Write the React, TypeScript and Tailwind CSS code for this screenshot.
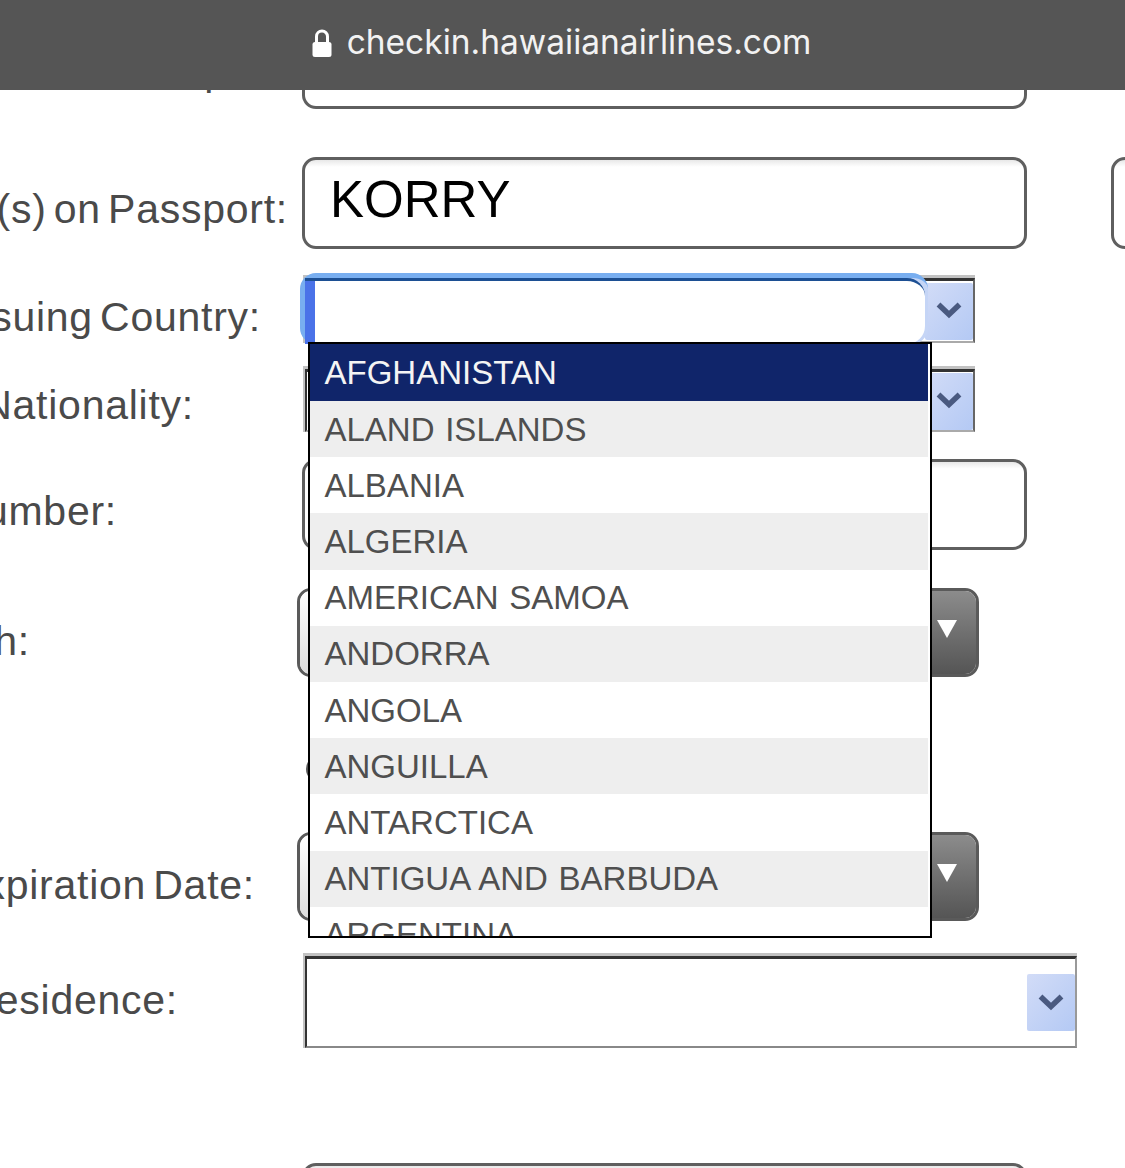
const countries = [
  "AFGHANISTAN",
  "ALAND ISLANDS",
  "ALBANIA",
  "ALGERIA",
  "AMERICAN SAMOA",
  "ANDORRA",
  "ANGOLA",
  "ANGUILLA",
  "ANTARCTICA",
  "ANTIGUA AND BARBUDA",
  "ARGENTINA",
];

function Label({ text, className }: { text: string; className: string }) {
  return (
    <div className={"flex shrink-0 justify-end whitespace-nowrap text-[41px] leading-[48px] tracking-[0.75px] [word-spacing:-5px] text-[#4a4a4a] " + className}>
      {text}
    </div>
  );
}

function Chevron() {
  return (
    <svg width="26" height="18" viewBox="0 0 26 18" fill="none">
      <polyline points="2.5,2.5 13,12.5 23.5,2.5" stroke="#4a5a80" strokeWidth="5.5" />
    </svg>
  );
}

function SelectButton() {
  return (
    <div className="flex h-[57px] w-[48px] items-center justify-center rounded-[2px] bg-linear-to-br from-[#d2dcf7] to-[#b4c9f4]">
      <Chevron />
    </div>
  );
}

function SelectField({ className, tall }: { className: string; tall?: boolean }) {
  return (
    <div className={"border-t-[3px] border-l-[2px] border-[#c2c2c2] " + className}>
      <div className={"flex h-full items-center justify-end border-t-[3px] border-r-[2px] border-b-[2px] border-l-[2px] border-t-[#333] border-l-[#333] bg-white " + (tall ? "border-r-[#999] border-b-[#888]" : "border-r-[#666] border-b-[#aaa]")}>
        <SelectButton />
      </div>
    </div>
  );
}

function DateField({ className }: { className: string }) {
  return (
    <div className={"flex h-[89px] w-[682px] overflow-hidden rounded-[14px] border-[3px] border-[#5a5a5a] " + className}>
      <div className="flex-1 bg-linear-to-b from-white to-[#dcdcdc]" />
      <div className="flex w-[45px] items-start bg-linear-to-b from-[#8c8c8c] to-[#555] pl-[6px] pt-[29px]">
        <svg width="20" height="18" viewBox="0 0 20 18">
          <polygon points="0,0 20,0 10,18" fill="#ffffff" />
        </svg>
      </div>
    </div>
  );
}

function TextField({ className, children }: { className: string; children?: React.ReactNode }) {
  return (
    <div className={"shrink-0 rounded-[14px] border-[3px] border-[#5f5f5f] bg-linear-to-b from-[#e8e8e8] from-0% to-white to-[8%] " + className}>
      {children}
    </div>
  );
}

export default function App() {
  return (
    <div className="relative h-[1168px] w-[1125px] overflow-hidden bg-white font-['Liberation_Sans',Arial,sans-serif]">
      <header className="relative z-10 flex h-[90px] items-center justify-center gap-[15px] bg-[#555555] pb-[4px] pr-[2px]">
        <svg width="20" height="28" viewBox="0 0 20 28" className="shrink-0">
          <path d="M4.5 15V7.5a5.5 5.5 0 0 1 11 0V15" fill="none" stroke="#fff" strokeWidth="3" />
          <rect x="0.5" y="13" width="19" height="15" rx="2.5" fill="#fff" />
        </svg>
        <span className="font-['Inter',sans-serif] text-[33.5px] leading-none text-[#f2f2f2]">checkin.hawaiianairlines.com</span>
      </header>

      <main className="flex flex-col">
        <div className="flex h-[19px]">
          <Label text="Last Name on Passport:" className="-mt-[43px] mr-[12px] w-[290px]" />
          <div className="h-[19px] w-[725px] rounded-b-[14px] border-[3px] border-t-0 border-[#5f5f5f]" />
        </div>

        <div className="mt-[48px] flex h-[92px]">
          <Label text="Given Name(s) on Passport:" className="mt-[28px] w-[302px] pr-[14px]" />
          <TextField className="h-[92px] w-[725px] pl-[25px] pt-[12px] text-[51px] leading-[56px] text-black">KORRY</TextField>
          <TextField className="ml-[84px] h-[92px] w-[200px]" />
        </div>

        <div className="mt-[26px] flex h-[68px]">
          <Label text="Passport Issuing Country:" className="mt-[18px] w-[303px] pr-[42px]" />
          <div className="relative">
            <SelectField className="h-[68px] w-[672px]" />
            <div className="absolute -left-[3px] -top-[2px] h-[71px] w-[628px] rounded-[16px] border-t-[5px] border-l-[5px] border-[#78aef0] bg-[#c5d5f6]">
              <div className="flex h-[66px] w-[620px] overflow-hidden rounded-r-[18px] border-t-[3px] border-[#1c4f93] bg-white">
                <div className="w-[10px] bg-[#4a72e8]" />
              </div>
            </div>
          </div>
        </div>

        <div className="mt-[23px] flex h-[66px]">
          <Label text="Nationality:" className="mt-[15px] w-[303px] pr-[109px]" />
          <SelectField className="h-[66px] w-[672px]" />
        </div>

        <div className="mt-[27px] flex h-[91px]">
          <Label text="Passport Number:" className="mt-[28px] w-[302px] pr-[185px]" />
          <TextField className="h-[91px] w-[725px]" />
        </div>

        <div className="mt-[38px] flex h-[89px]">
          <Label text="Date of Birth:" className="mt-[29px] w-[297px] pr-[267px]" />
          <DateField className="" />
        </div>

        <div className="mt-[78px] flex h-[28px] pl-[306px]">
          <div className="h-[28px] w-[28px] rounded-full border-[3px] border-[#555]" />
        </div>

        <div className="mt-[49px] flex h-[89px]">
          <Label text="Passport Expiration Date:" className="mt-[29px] w-[297px] pr-[42px]" />
          <DateField className="" />
        </div>

        <div className="mt-[32px] flex h-[95px]">
          <Label text="Country of Residence:" className="mt-[23px] w-[303px] pr-[125px]" />
          <SelectField className="h-[95px] w-[774px]" tall />
        </div>

        <div className="mt-[115px] flex">
          <TextField className="ml-[302px] h-[92px] w-[725px]" />
        </div>
      </main>

      <div className="absolute left-[308px] top-[342px] z-20 h-[596px] w-[624px] overflow-hidden border-[2px] border-black bg-white pr-[2px]">
        {countries.map((c, i) => (
          <div
            key={c}
            className={
              "flex items-center whitespace-nowrap pl-[14.5px] text-[33px] leading-none [word-spacing:1.5px] " +
              (i === 0 ? "h-[57px] bg-[#10256a] text-[#f4f4f4]" : i % 2 === 1 ? "h-[56.2px] bg-[#eeeeee] text-[#4f4f4f]" : "h-[56.2px] bg-white text-[#4f4f4f]")
            }
          >
            {c}
          </div>
        ))}
      </div>
    </div>
  );
}
